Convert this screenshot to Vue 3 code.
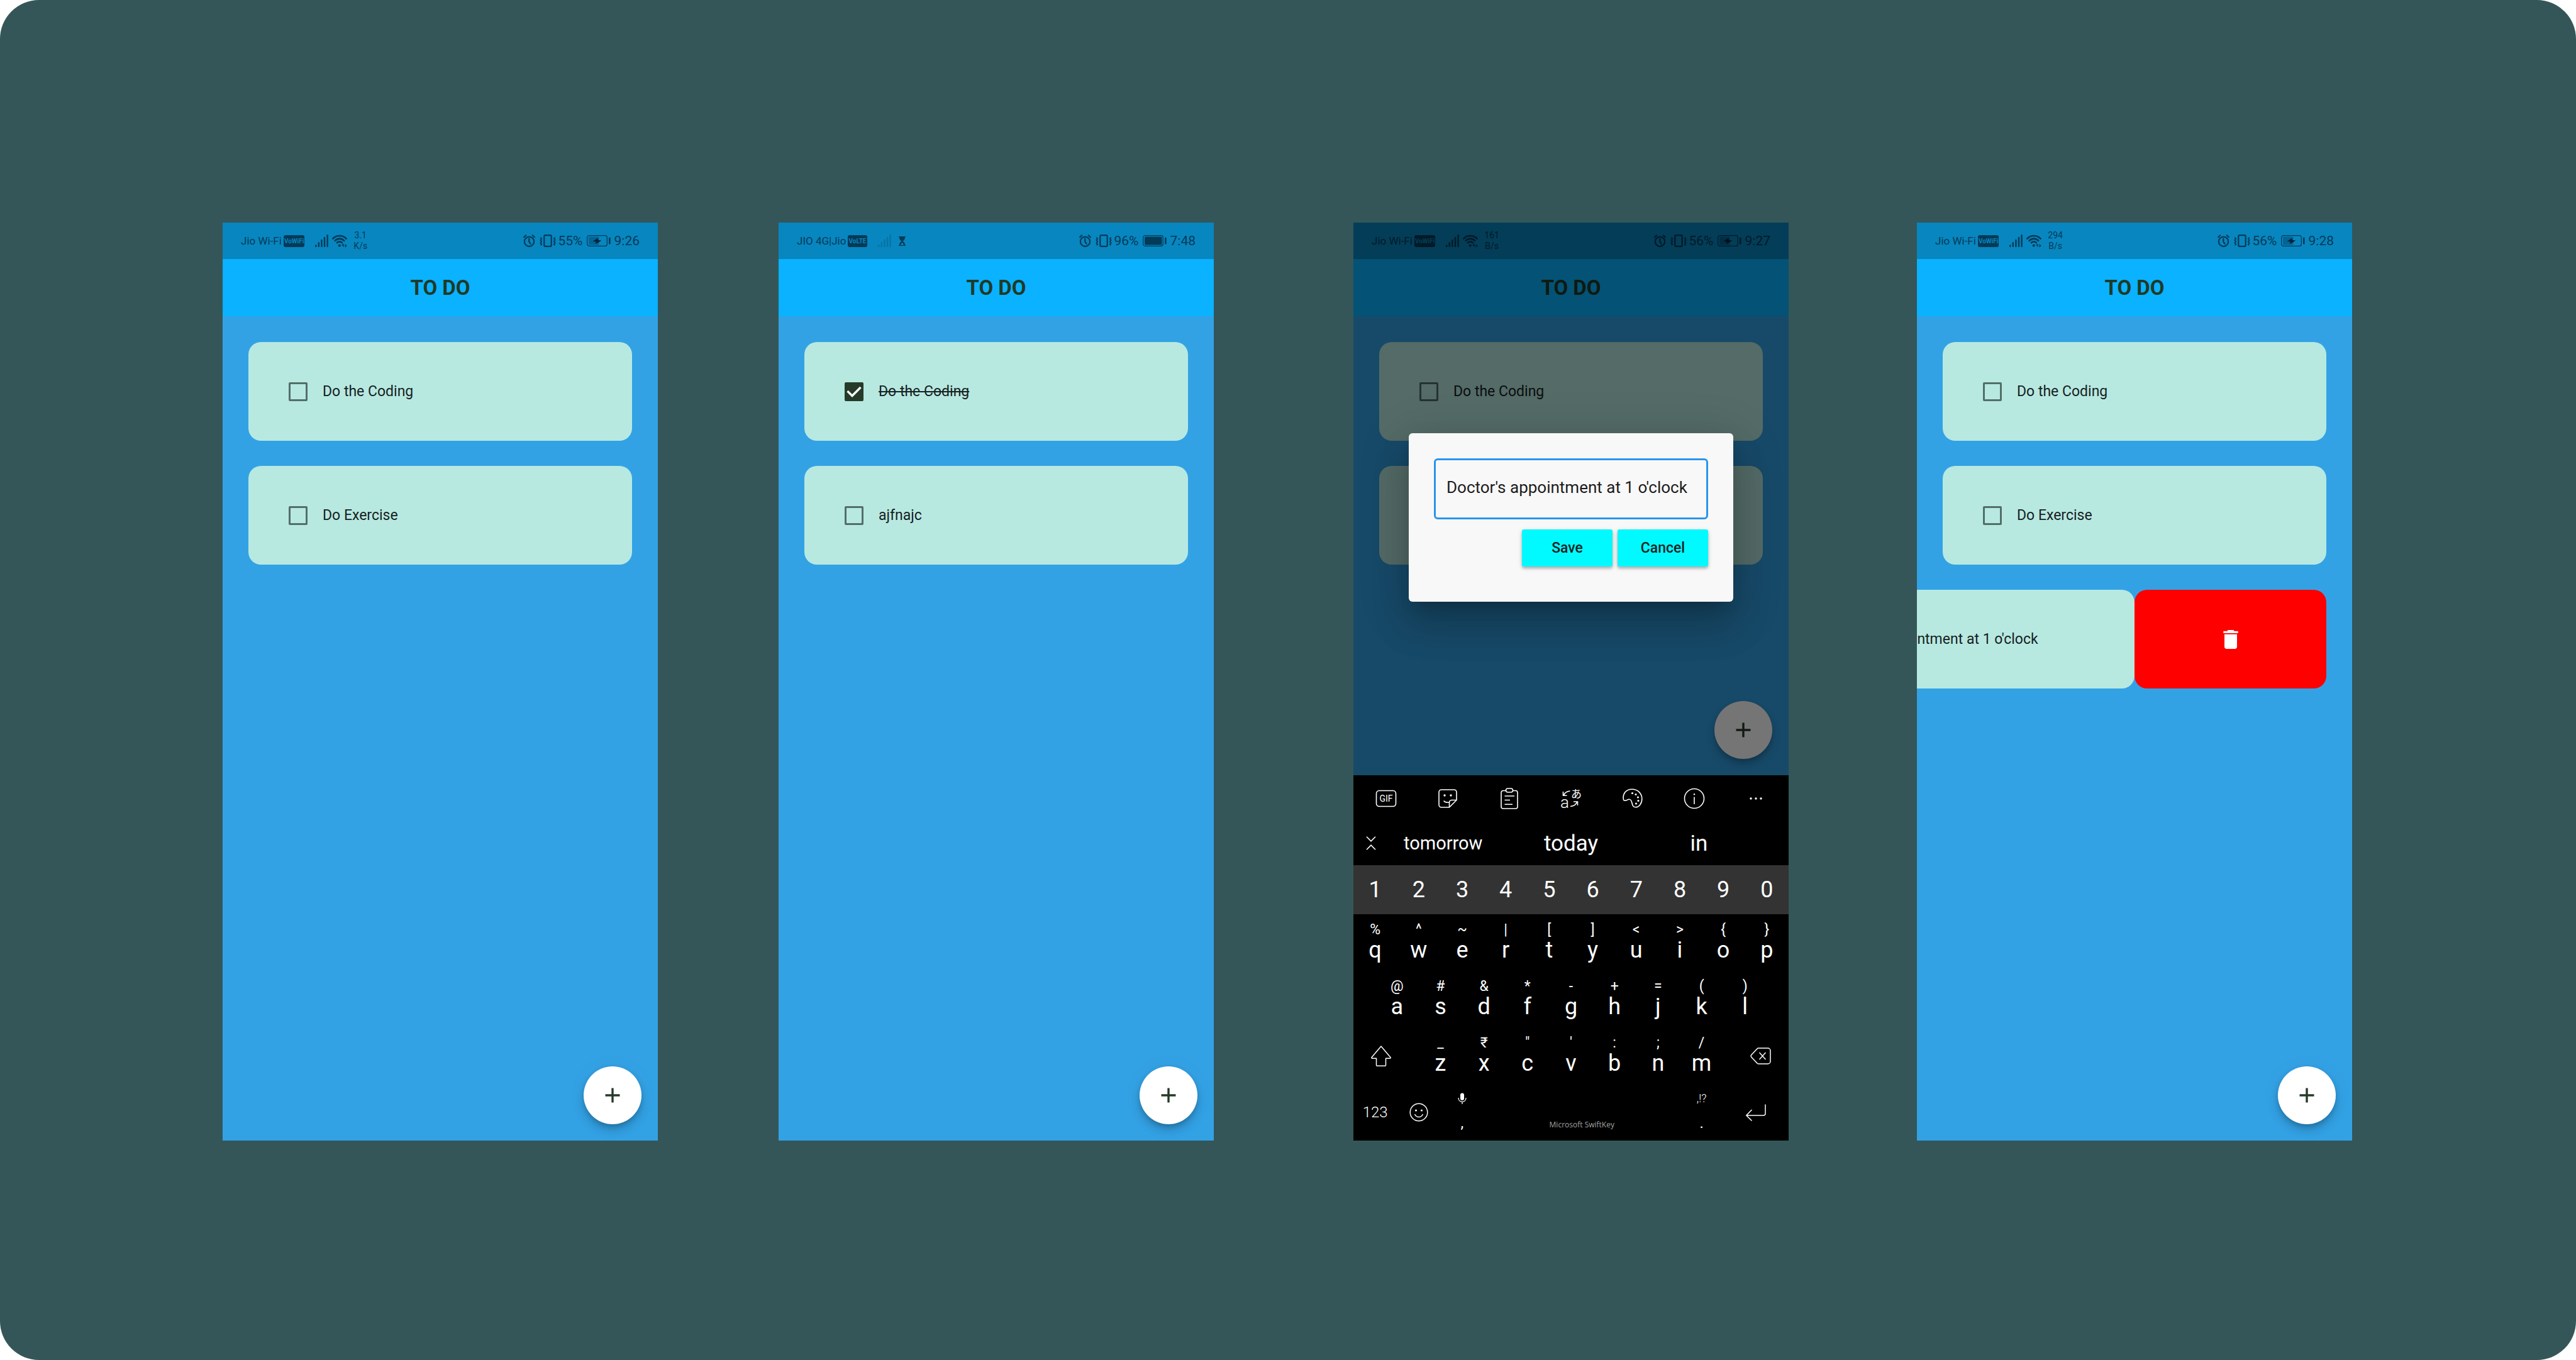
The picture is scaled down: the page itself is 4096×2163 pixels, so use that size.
<script setup>
import { reactive, ref } from 'vue'

const draft = ref("Doctor's appointment at 1 o'clock")

const phones = reactive([
  {
    id: 'list', carrier: 'Jio Wi-Fi', badge: 'VoWiFi', wifi: true, rate: ['3.1', 'K/s'],
    battery: '55%', charging: true, time: '9:26',
    tasks: [{ text: 'Do the Coding', done: false }, { text: 'Do Exercise', done: false }]
  },
  {
    id: 'done', carrier: 'JIO 4G|Jio', badge: 'VoLTE', wifi: false, rate: null,
    battery: '96%', charging: false, time: '7:48',
    tasks: [{ text: 'Do the Coding', done: true }, { text: 'ajfnajc', done: false }]
  },
  {
    id: 'add', carrier: 'Jio Wi-Fi', badge: 'VoWiFi', wifi: true, rate: ['161', 'B/s'],
    battery: '56%', charging: true, time: '9:27', editing: true,
    tasks: [{ text: 'Do the Coding', done: false }, { text: 'Do Exercise', done: false }]
  },
  {
    id: 'remove', carrier: 'Jio Wi-Fi', badge: 'VoWiFi', wifi: true, rate: ['294', 'B/s'],
    battery: '56%', charging: true, time: '9:28',
    tasks: [
      { text: 'Do the Coding', done: false },
      { text: 'Do Exercise', done: false },
      { text: "Doctor's appointment at 1 o'clock", done: false, swiped: true }
    ]
  }
])

const digits = [...'1234567890']
const pair = (hints, letters) => [...letters].map((letter, i) => ({ letter, hint: hints[i] }))
const topRow = pair('%^~|[]<>{}', 'qwertyuiop')
const homeRow = pair('@#&*-+=()', 'asdfghjkl')
const bottomRow = pair('_₹"\':;/', 'zxcvbnm')
</script>

<template>
  <main class="board">
    <section v-for="phone in phones" :key="phone.id" class="phone">
      <div class="screen">
        <div class="status">
          <span class="carrier">{{ phone.carrier }}</span>
          <span class="badge">{{ phone.badge }}</span>
          <svg class="signal" :class="{ weak: !phone.wifi }" width="21" height="20" viewBox="0 0 21 20">
            <path d="M1.3 17.4v1.3M5.8 13.2v5.5M10.4 9v9.7M15 5v13.7M19.6 1.3v17.4" fill="none" stroke="currentColor" stroke-width="2.4" stroke-linecap="round" />
          </svg>
          <svg v-if="phone.wifi" class="wifi" width="24" height="21" viewBox="0 0 24 21">
            <path d="M1.2 6.6a14.6 14.6 0 0 1 21.4 0M4.6 9.8a10 10 0 0 1 14.6 0M8 13a5.400 5.400 0 0 1 7.800 0" fill="none" stroke="currentColor" stroke-width="2.6" stroke-linecap="round" />
            <circle cx="11.8" cy="17.5" r="2" fill="currentColor" />
            <path d="M18.600 14.500v5.500l-3.300-3.500zM20.600 20.500v-5.500l3.200 3z" fill="currentColor" />
          </svg>
          <svg v-else class="hourglass" width="11" height="15" viewBox="0 0 11 15">
            <path d="M0 0h11v1.200h-1c0 3-1.300 4.600-3.500 6.300 2.200 1.700 3.500 3.300 3.500 6.300h1V15H0v-1.200h1c0-3 1.300-4.600 3.500-6.300C2.300 5.800 1 4.200 1 1.200H0zM5.500 9.500l-3 4.300h6z" fill="currentColor" fill-rule="evenodd" />
          </svg>
          <span v-if="phone.rate" class="rate"><span>{{ phone.rate[0] }}</span><span>{{ phone.rate[1] }}</span></span>
          <svg class="alarm" width="19" height="20" viewBox="0 0 19 20">
            <g fill="none" stroke="currentColor" stroke-width="2.2" stroke-linecap="round">
              <circle cx="9.500" cy="11.200" r="7.600" />
              <path d="M9.300 6.800v4.600l2.300 3.200M1.200 4.200l3-2.900M17.800 4.200l-3-2.900" />
            </g>
          </svg>
          <svg class="vibrate" width="26" height="20" viewBox="0 0 26 20">
            <g fill="none" stroke="currentColor" stroke-width="2.2" stroke-linejoin="round">
              <rect x="7.300" y="1.200" width="11.400" height="17.600" rx="1.800" />
              <path d="M1.300 4.500l2 2.200-2 2.200 2 2.200-2 2.200 2 2.200-1.600 1.600M24.700 4.500l-2 2.200 2 2.200-2 2.200 2 2.200-2 2.200 1.600 1.600" stroke-width="1.800" />
            </g>
          </svg>
          <span class="level">{{ phone.battery }}</span>
          <svg class="battery" width="38" height="18" viewBox="0 0 38 18">
            <rect x="0.700" y="0.700" width="31.600" height="16.600" rx="3" fill="none" stroke="currentColor" stroke-width="1.200" />
            <rect x="35" y="3.500" width="2.600" height="11" rx="1.300" fill="currentColor" />
            <template v-if="phone.charging">
              <rect x="3" y="2.500" width="16.500" height="13" rx="1.500" fill="#036596" />
              <path d="M17.500 4.500l-8 5.400 5.200.4-.6 3.700 9.400-5.500-5.400-.6z" fill="#012238" />
            </template>
            <rect v-else x="3" y="2.500" width="27.500" height="13" rx="1.500" fill="currentColor" />
          </svg>
          <time class="clock">{{ phone.time }}</time>
        </div>

        <header class="appbar"><h1>TO DO</h1></header>

        <ul class="tasks">
          <li v-for="(task, i) in phone.tasks" :key="i" class="row">
            <label class="card" :class="{ done: task.done }">
              <span class="tick">
                <input v-model="task.done" type="checkbox" />
                <svg v-if="task.done" viewBox="0 0 30 30" width="30" height="30">
                  <path d="M4.500 14l7.500 7.500L25.500 8" fill="none" stroke="#fff" stroke-width="3.400" />
                </svg>
              </span>
              <span class="text">{{ task.text }}</span>
            </label>
            <button v-if="task.swiped" class="delete" type="button" aria-label="Delete task">
              <svg viewBox="0 0 24 24" width="40" height="40">
                <path d="M6 19c0 1.100.9 2 2 2h8c1.100 0 2-.9 2-2V7H6v12zM19 4h-3.500l-1-1h-5l-1 1H5v2h14V4z" fill="#fff" />
              </svg>
            </button>
          </li>
        </ul>

        <button class="fab" type="button" aria-label="Add task">
          <svg viewBox="0 0 24 24" width="24" height="24">
            <path d="M12 .5v23M.5 12h23" stroke="#263a29" stroke-width="3.400" />
          </svg>
        </button>

        <div v-if="phone.editing" class="scrim">
          <form class="dialog" @submit.prevent>
            <input v-model="draft" class="field" type="text" aria-label="New task" />
            <div class="actions">
              <button type="submit">Save</button>
              <button type="button">Cancel</button>
            </div>
          </form>
        </div>
      </div>

      <div v-if="phone.editing" class="keyboard">
        <div class="tools">
          <button type="button" aria-label="GIF">
            <svg width="34" height="28" viewBox="0 0 34 28">
              <rect x="1.500" y="1.500" width="31" height="25" rx="4.500" fill="none" stroke="currentColor" stroke-width="1.600" />
              <text x="17" y="19" text-anchor="middle" font-size="14" fill="currentColor">GIF</text>
            </svg>
          </button>
          <button type="button" aria-label="Stickers">
            <svg width="30" height="30" viewBox="0 0 30 30" fill="none" stroke="currentColor" stroke-width="1.600" stroke-linejoin="round" stroke-linecap="round">
              <path d="M17.500 29H5a4 4 0 0 1-4-4V5a4 4 0 0 1 4-4h20a4 4 0 0 1 4 4v12.500zM17.500 29v-7.500a4 4 0 0 1 4-4H29M9 19c1.500 1.700 4.500 2.600 8.300 2.200" />
              <g fill="currentColor" stroke="none"><circle cx="10" cy="10" r="1.700" /><circle cx="20" cy="10" r="1.700" /></g>
            </svg>
          </button>
          <button type="button" aria-label="Clipboard">
            <svg width="28" height="34" viewBox="0 0 28 34" fill="none" stroke="currentColor" stroke-width="1.600" stroke-linejoin="round">
              <path d="M8.500 4.500H4a3 3 0 0 0-3 3V30a3 3 0 0 0 3 3h20a3 3 0 0 0 3-3V7.500a3 3 0 0 0-3-3h-4.500M6.500 13H22M6.500 19.500H15M6.500 26.300H19" />
              <rect x="8.500" y="1" width="11" height="6" rx="3" />
            </svg>
          </button>
          <button type="button" aria-label="Translate">
            <svg width="48" height="48" viewBox="-7 -8 48 48">
              <text x="0" y="31" font-size="26" font-weight="300" fill="currentColor">a</text>
              <text x="17" y="15" font-size="17" class="kana" fill="currentColor">あ</text>
              <path d="M15.500 4C10.500 4.500 7 6.500 5.500 10.800M4.500 5v6.200h6M16 28.500c6.500-.5 9.500-3.300 11-8M21 21h6.500v6" fill="none" stroke="currentColor" stroke-width="1.600" />
            </svg>
          </button>
          <button type="button" aria-label="Themes">
            <svg width="32" height="31" viewBox="0 0 32 31">
              <path d="M1.500 18C-.5 8 6 1.200 15 1.200c9 0 15.800 6.500 15.800 15.300 0 7.500-4.800 13.300-9.800 13.300-4.500 0-5.200-3-6-6.500-.9-4-1.800-6-4.500-6-3 0-3.500 2-6 2-1.500 0-2.700-.4-3-1.300z" fill="none" stroke="currentColor" stroke-width="1.600" />
              <g fill="currentColor"><circle cx="15.500" cy="7.500" r="1.600" /><circle cx="21" cy="9.500" r="1.600" /><circle cx="24.500" cy="14" r="1.600" /><circle cx="25" cy="19.500" r="1.600" /><circle cx="21.500" cy="24" r="1.600" /></g>
            </svg>
          </button>
          <button type="button" aria-label="Information">
            <svg width="34" height="34" viewBox="0 0 34 34">
              <circle cx="17" cy="17" r="15.500" fill="none" stroke="currentColor" stroke-width="1.600" />
              <path d="M17 14.500v11.500" stroke="currentColor" stroke-width="1.600" />
              <circle cx="17" cy="10.200" r="1.200" fill="currentColor" />
            </svg>
          </button>
          <button type="button" aria-label="More">
            <svg width="20" height="4" viewBox="0 0 20 4" fill="currentColor">
              <circle cx="2" cy="2" r="1.700" /><circle cx="10" cy="2" r="1.700" /><circle cx="18" cy="2" r="1.700" />
            </svg>
          </button>
        </div>

        <div class="suggestions">
          <button type="button" aria-label="Collapse toolbar">
            <svg width="16" height="22" viewBox="0 0 16 22">
              <path d="M1 .8l7 7 7-7M1 21.200l7-7 7 7" fill="none" stroke="currentColor" stroke-width="1.600" />
            </svg>
          </button>
          <button type="button" class="minor">tomorrow</button>
          <button type="button">today</button>
          <button type="button">in</button>
        </div>

        <div class="digits">
          <button v-for="d in digits" :key="d" type="button">{{ d }}</button>
        </div>

        <div class="keys">
          <button v-for="k in topRow" :key="k.letter" type="button" class="key"><small>{{ k.hint }}</small><span>{{ k.letter }}</span></button>
        </div>
        <div class="keys inset">
          <button v-for="k in homeRow" :key="k.letter" type="button" class="key"><small>{{ k.hint }}</small><span>{{ k.letter }}</span></button>
        </div>
        <div class="keys shifted">
          <button type="button" class="shift" aria-label="Shift">
            <svg width="32" height="33" viewBox="0 0 32 33">
              <path d="M16 1L1.200 18.500c-.6.900-.3 1.700.8 1.700H8.500V31c0 .8.400 1.200 1.200 1.200h12.600c.8 0 1.200-.4 1.200-1.200V20.200H30c1.100 0 1.400-.8.800-1.700z" fill="none" stroke="currentColor" stroke-width="1.500" stroke-linejoin="round" />
            </svg>
          </button>
          <button v-for="k in bottomRow" :key="k.letter" type="button" class="key"><small>{{ k.hint }}</small><span>{{ k.letter }}</span></button>
          <button type="button" class="backspace" aria-label="Backspace">
            <svg width="33" height="27" viewBox="0 0 33 27" fill="none" stroke="currentColor" stroke-width="1.500" stroke-linejoin="round">
              <path d="M13 1h15a4 4 0 0 1 4 4v17a4 4 0 0 1-4 4H13c-1 0-1.600-.4-2.300-1.200L1.800 15.200c-1-1.200-1-2.200 0-3.400l8.900-9.600C11.400 1.400 12 1 13 1zM14.500 8l10 11M24.500 8l-10 11" />
            </svg>
          </button>
        </div>
        <div class="keys space-row">
          <button type="button" class="mode">123</button>
          <button type="button" aria-label="Emoji">
            <svg width="30" height="30" viewBox="0 0 30 30">
              <g fill="none" stroke="currentColor" stroke-width="1.500" stroke-linecap="round"><circle cx="15" cy="15" r="13.800" /><path d="M8.800 18.500c2.600 5.400 9.800 5.400 12.400 0" /></g>
              <g fill="currentColor"><circle cx="10.500" cy="12" r="1.600" /><circle cx="19.500" cy="12" r="1.600" /></g>
            </svg>
          </button>
          <button type="button" class="punct" aria-label="Comma">
            <svg width="14" height="18" viewBox="0 0 14 18">
              <rect x="4" y="0.500" width="6" height="11.500" rx="3" fill="currentColor" />
              <path d="M1 8c0 8.500 12 8.500 12 0M7 14.500V18" fill="none" stroke="currentColor" stroke-width="1.300" />
            </svg>
            <span>,</span>
          </button>
          <button type="button" class="space">Microsoft SwiftKey</button>
          <button type="button" class="punct"><small>,!?</small><span>.</span></button>
          <button type="button" aria-label="Enter">
            <svg width="34" height="27" viewBox="0 0 34 27">
              <path d="M32 .5V15a3 3 0 0 1-3 3H2M10.500 9L1.800 18l8.700 8.500" fill="none" stroke="currentColor" stroke-width="1.500" />
            </svg>
          </button>
        </div>
      </div>
    </section>
  </main>
</template>

<style>
body {
  margin: 0;
  background: #fff;
}
</style>

<style scoped>
* {
  box-sizing: border-box;
}

button {
  margin: 0;
  padding: 0;
  border: 0;
  background: none;
  color: inherit;
  font: inherit;
}

svg {
  display: block;
  flex: none;
}

.board {
  display: grid;
  grid-template-columns: 354fr 692fr 192fr 692fr 222fr 692fr 204fr 692fr 356fr;
  align-items: start;
  min-height: 100vh;
  padding: 354px 0 340px;
  border-radius: 62px;
  background: #345659;
  font-family: Roboto, "Liberation Sans", sans-serif;
}

.phone {
  display: flex;
  flex-direction: column;
  min-width: 0;
  min-height: 1460px;
  overflow: hidden;
  background: #33a2e5;
}

.phone:nth-child(1) { grid-column: 2; }
.phone:nth-child(2) { grid-column: 4; }
.phone:nth-child(3) { grid-column: 6; }
.phone:nth-child(4) { grid-column: 8; }

.screen {
  position: relative;
  flex: 1;
}

.status {
  display: flex;
  align-items: center;
  height: 58px;
  padding: 0 29px;
  background: #0886bf;
  color: #023a58;
  white-space: nowrap;
}

.carrier {
  font-size: 17px;
}

.badge {
  margin-left: 3px;
  padding: 0 1px;
  border-radius: 3px;
  background: #023a58;
  color: #0886bf;
  font-size: 10px;
  font-weight: 700;
  line-height: 19px;
}

.signal {
  margin-left: 17px;
}

.signal.weak {
  color: #0573a5;
}

.wifi {
  margin-left: 6px;
}

.hourglass {
  margin-left: 12px;
}

.rate {
  display: flex;
  flex-direction: column;
  align-items: center;
  margin-left: 10px;
  font-size: 14px;
  line-height: 17px;
}

.alarm {
  margin-left: auto;
}

.vibrate {
  margin-left: 7px;
}

.level,
.clock {
  font-size: 21px;
}

.level {
  margin-left: 4px;
}

.battery {
  margin: 0 6px;
}

.appbar {
  display: grid;
  place-items: center;
  height: 91px;
  background: #0ab2ff;
}

.appbar h1 {
  margin: 0;
  color: #203a27;
  font-size: 33px;
  font-weight: 700;
}

.tasks {
  display: flex;
  flex-direction: column;
  gap: 40px;
  margin: 0;
  padding: 41px;
  list-style: none;
}

.row {
  display: flex;
  justify-content: flex-end;
  height: 157px;
}

.card {
  display: flex;
  flex: 0 0 100%;
  align-items: center;
  gap: 24px;
  padding-left: 64px;
  border-radius: 20px;
  background: #b7e9e1;
  color: #17211f;
  font-size: 23px;
  white-space: nowrap;
}

.card.done .text {
  text-decoration: line-through 2px;
}

.tick {
  display: grid;
}

.tick > * {
  grid-area: 1 / 1;
}

.tick svg {
  z-index: 1;
  pointer-events: none;
}

.tick input {
  width: 30px;
  height: 30px;
  margin: 0;
  border: 3px solid #546e69;
  border-radius: 2px;
  appearance: none;
}

.tick input:checked {
  border-color: #263a29;
  background: #263a29;
}

.delete {
  display: grid;
  flex: 0 0 50%;
  place-items: center;
  border-radius: 20px;
  background: #f00;
}

.fab {
  position: absolute;
  right: 26px;
  bottom: 26px;
  display: grid;
  place-items: center;
  width: 92px;
  height: 92px;
  border-radius: 50%;
  background: #fff;
  box-shadow: 0 5px 8px -2px rgba(0, 0, 0, 0.2), 0 10px 16px rgba(0, 0, 0, 0.14), 0 2px 30px rgba(0, 0, 0, 0.06);
}

.scrim {
  position: absolute;
  inset: 0;
  display: grid;
  place-items: center;
  padding: 58px 88px 0;
  background: rgba(0, 0, 0, 0.54);
}

.dialog {
  width: 100%;
  padding: 40px 40px 56px;
  border-radius: 6px;
  background: #f8f8f8;
  box-shadow: 0 18px 24px -12px rgba(0, 0, 0, 0.2), 0 38px 60px 4px rgba(0, 0, 0, 0.14), 0 14px 74px 12px rgba(0, 0, 0, 0.12);
}

.field {
  display: block;
  width: 100%;
  height: 97px;
  padding: 0 17px 4px;
  border: 3px solid #2a95ec;
  border-radius: 6px;
  outline: 0;
  background: transparent;
  color: #1c1c1c;
  font: 26px Roboto, sans-serif;
}

.actions {
  display: flex;
  justify-content: flex-end;
  gap: 8px;
  margin-top: 16px;
}

.actions button {
  width: 144px;
  height: 59px;
  border-radius: 3px;
  background: #00faff;
  box-shadow: 0 3px 4px rgba(0, 0, 0, 0.24), 0 2px 8px rgba(0, 0, 0, 0.12);
  color: #1c2020;
  font-size: 23px;
  font-weight: 500;
}

.keyboard {
  background: #000;
  color: #fff;
}

.tools {
  display: grid;
  grid-template-columns: repeat(7, 1fr);
  height: 73px;
  padding: 0 3px;
}

.tools button,
.suggestions button,
.keys > button {
  display: flex;
  align-items: center;
  justify-content: center;
}

.kana {
  font-family: "Noto Sans CJK JP", sans-serif;
}

.suggestions {
  display: grid;
  grid-template-columns: 41px 1fr 1fr 1fr;
  height: 70px;
  padding-right: 41px;
  font-size: 35px;
}

.suggestions svg {
  margin-left: 14px;
}

.suggestions .minor {
  font-size: 29px;
}

.digits {
  display: grid;
  grid-template-columns: repeat(10, 1fr);
  height: 78px;
  background: #333;
  font-size: 36px;
}

.keys {
  display: grid;
  grid-template-columns: repeat(10, 10%);
  height: 90px;
}

.keys.inset {
  grid-template-columns: repeat(9, 10%);
  justify-content: center;
}

.keys.shifted {
  grid-template-columns: 15% repeat(7, 10%) 15%;
}

.keys.space-row {
  grid-template-columns: 10% 10% 10% 45% 10% 15%;
}

.keys > .key,
.keys > .punct {
  flex-direction: column;
  justify-content: flex-start;
  padding-top: 11px;
}

.key small {
  font-size: 23px;
  line-height: 27px;
}

.key span {
  font-size: 36px;
  line-height: 38px;
}

.keys > .shift {
  padding-right: 15px;
}

.keys > .backspace {
  padding-left: 15px;
}

.mode {
  font-size: 24px;
  font-weight: 300;
}

.keys > .punct {
  padding-top: 14px;
}

.punct small {
  font-size: 18px;
  font-weight: 300;
  line-height: 18px;
}

.punct span {
  margin-top: auto;
  padding-bottom: 16px;
  font-size: 24px;
  line-height: 24px;
}

.keys > .space {
  align-items: flex-end;
  padding-bottom: 17px;
  color: #a0a0a0;
  font: 12px/16px "Open Sans", sans-serif;
}
</style>
